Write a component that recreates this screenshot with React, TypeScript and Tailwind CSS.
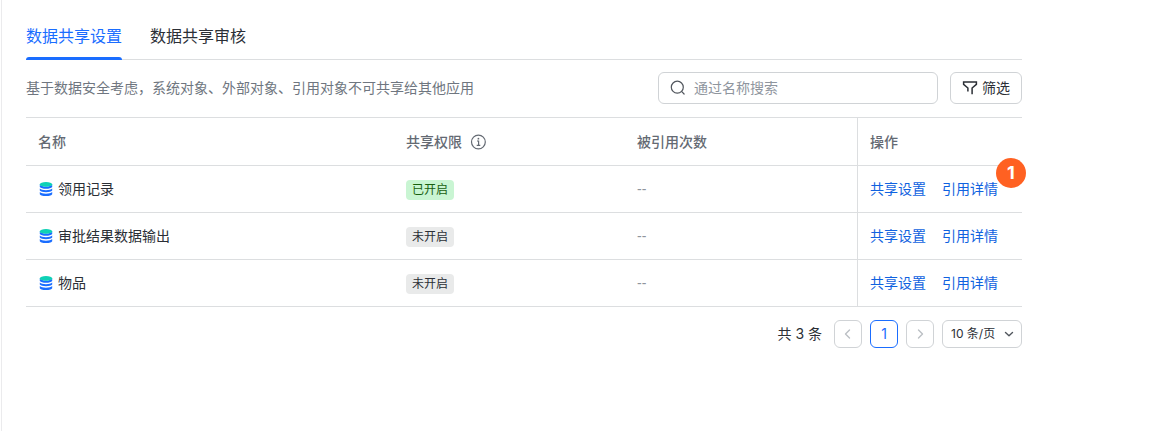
import { useState } from 'react'

const tabs = ['数据共享设置', '数据共享审核']

const rows = [
  { id: 1, name: '领用记录', shared: true, refs: '--' },
  { id: 2, name: '审批结果数据输出', shared: false, refs: '--' },
  { id: 3, name: '物品', shared: false, refs: '--' },
]

function SearchIcon() {
  return (
    <svg className="w-4 h-4 shrink-0" viewBox="0 0 16 16" fill="none" stroke="currentColor" strokeWidth="1.2" strokeLinecap="round">
      <circle cx="7.3" cy="7.2" r="6" />
      <path d="M11.8 11.7l2.3 2.3" />
    </svg>
  )
}

function FilterIcon() {
  return (
    <svg className="w-4 h-4" viewBox="0 0 16 16" fill="none" stroke="currentColor" strokeWidth="1.5">
      <path d="M5.9 11.6V8L1.6 4.3V1.9H14.4V4.3L10.1 8V14.2" />
    </svg>
  )
}

function InfoIcon() {
  return (
    <svg className="w-4 h-4" viewBox="0 0 16 16" fill="none" stroke="currentColor" strokeWidth="1.2">
      <circle cx="8.4" cy="8" r="6.9" />
      <path d="M7 7H8.6V11.2M6.7 11.4H10.3" />
      <circle cx="8.4" cy="4.7" r="0.9" fill="currentColor" stroke="none" />
    </svg>
  )
}

function DatabaseIcon() {
  return (
    <svg className="w-4 h-4 shrink-0" viewBox="0 0 16 16">
      <path fill="#1a6dff" d="M1.8 3.5C3 5 5 5.6 8 5.6S13 5 14.2 3.5V6C13.2 7.200 11 7.800 8 7.800S2.800 7.200 1.800 6z" />
      <path fill="#1a6dff" d="M1.8 7.500C3 8.700 5 9.200 8 9.200S13 8.700 14.200 7.500V9.600C13.200 10.700 11 11.200 8 11.200S2.800 10.700 1.800 9.600z" />
      <path fill="#1a6dff" d="M1.8 11.100C3 12.200 5 12.700 8 12.700S13 12.200 14.200 11.100V12.900C14.200 14.100 11.400 15 8 15S1.800 14.100 1.800 12.900z" />
      <ellipse cx="8" cy="3.4" rx="6.2" ry="2.3" fill="#0fd1b5" />
    </svg>
  )
}

function Chevron({ d }: { d: string }) {
  return (
    <svg className="w-3 h-3" viewBox="0 0 12 12" fill="none" stroke="currentColor" strokeWidth="1.4" strokeLinecap="round" strokeLinejoin="round">
      <path d={d} />
    </svg>
  )
}

export default function App() {
  const [active, setActive] = useState(0)
  const [keyword, setKeyword] = useState('')
  const [pageSize, setPageSize] = useState('10')

  const items = rows.filter((r) => r.name.includes(keyword))

  return (
    <div className="min-h-screen bg-white pl-px font-['Inter','Noto_Sans_CJK_SC',sans-serif] text-sm text-[#2b2f36]">
      <main className="min-h-screen border-l border-[#ebebed] pl-6 pr-[152px] pt-3">
        <nav className="flex gap-7 border-b border-[#dcdee0]">
          {tabs.map((tab, i) => (
            <button
              key={tab}
              type="button"
              onClick={() => setActive(i)}
              className={`relative h-[47px] text-base leading-6 ${active === i ? 'text-[#1a6dff]' : ''}`}
            >
              {tab}
              {active === i && <span className="absolute inset-x-0 -bottom-px h-[3px] rounded-t-sm bg-[#1a6dff]" />}
            </button>
          ))}
        </nav>

        <div className="flex items-center gap-3 py-3">
          <p className="flex-1 text-[#6f7680]">基于数据安全考虑，系统对象、外部对象、引用对象不可共享给其他应用</p>
          <label className="flex h-8 w-[280px] items-center gap-2 rounded-md border border-[#d0d3d6] px-[11px] text-[#51565d]">
            <SearchIcon />
            <input
              value={keyword}
              onChange={(e) => setKeyword(e.target.value)}
              aria-label="通过名称搜索"
              placeholder="通过名称搜索"
              className="min-w-0 flex-1 bg-transparent outline-none placeholder:text-[#8f959e]"
            />
          </label>
          <button type="button" className="flex h-8 items-center gap-1 rounded-md border border-[#d0d3d6] px-[11px]">
            <FilterIcon /> 筛选
          </button>
        </div>

        <table className="mt-px w-full table-fixed border-separate border-spacing-0 border-t border-[#dcdee0] text-left">
          <thead>
            <tr className="text-[#646a73] *:h-12 *:border-b *:border-[#dcdee0] *:px-3 *:font-medium">
              <th className="w-[368px]">名称</th>
              <th className="w-[231px]">
                <span className="flex items-center gap-2">共享权限 <InfoIcon /></span>
              </th>
              <th>被引用次数</th>
              <th className="w-[165px] border-l">操作</th>
            </tr>
          </thead>
          <tbody>
            {items.map((r, i) => (
              <tr key={r.id} className="*:h-[47px] *:border-b *:border-[#dcdee0] *:px-3">
                <td>
                  <span className="flex items-center gap-1"><DatabaseIcon /> {r.name}</span>
                </td>
                <td>
                  <span className={`inline-block rounded px-1.5 text-xs leading-5 ${r.shared ? 'bg-[#c9f5d3] text-[#186010]' : 'bg-[#e9eaea] text-[#2b2f36]'}`}>
                    {r.shared ? '已开启' : '未开启'}
                  </span>
                </td>
                <td className="font-['Liberation_Sans',sans-serif] text-[#8f959e]">{r.refs}</td>
                <td className="relative border-l">
                  <span className="flex gap-4 text-[#0f62e0]">
                    <a href="#share">共享设置</a>
                    <a href="#refs">引用详情</a>
                  </span>
                  {i === 0 && (
                    <span className="absolute -right-1 -top-2 flex h-[30px] w-[30px] items-center justify-center rounded-full bg-[#ff6122] text-lg font-bold text-white">
                      1
                    </span>
                  )}
                </td>
              </tr>
            ))}
          </tbody>
        </table>

        <div className="flex items-center justify-end gap-2 pt-[13px]">
          <span className="mr-1">共 {rows.length} 条</span>
          <button type="button" aria-label="上一页" className="flex h-7 w-7 items-center justify-center rounded-md border border-[#d0d3d6] text-[#bbbfc4]">
            <Chevron d="M7.5 2L3.5 6L7.5 10" />
          </button>
          <button type="button" className="h-7 w-7 rounded-md border border-[#1a6dff] text-[#1a6dff]">1</button>
          <button type="button" aria-label="下一页" className="flex h-7 w-7 items-center justify-center rounded-md border border-[#d0d3d6] text-[#bbbfc4]">
            <Chevron d="M4.5 2L8.5 6L4.5 10" />
          </button>
          <div className="relative">
            <select
              value={pageSize}
              onChange={(e) => setPageSize(e.target.value)}
              aria-label="每页条数"
              className="h-7 w-20 appearance-none rounded-md border border-[#d0d3d6] pl-2 text-xs"
            >
              <option value="10">10 条/页</option>
              <option value="20">20 条/页</option>
              <option value="50">50 条/页</option>
            </select>
            <span className="pointer-events-none absolute inset-y-0 right-[7px] flex items-center text-[#51565d]">
              <Chevron d="M2.5 4.5L6 7.7L9.5 4.5" />
            </span>
          </div>
        </div>
      </main>
    </div>
  )
}
